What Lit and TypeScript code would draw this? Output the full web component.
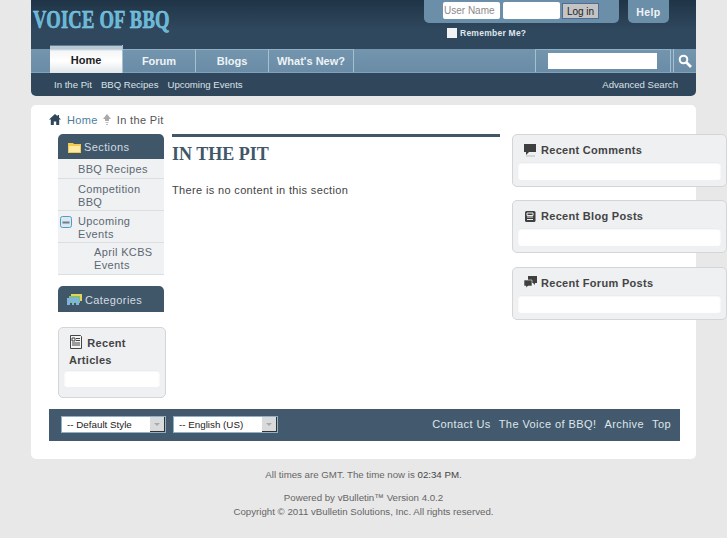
import { LitElement, html, css } from "lit";
import { customElement } from "lit/decorators.js";

@customElement("app-root")
export class AppRoot extends LitElement {
  static styles = css`
    :host { display: block; height: 538px; background: #e8e8e8; overflow: hidden; font-family: "Liberation Sans", Arial, sans-serif; color: #3e3e3e; }
    * { box-sizing: border-box; }
    .wrap { width: 665px; margin-left: 31px; }
    header { height: 96px; background: linear-gradient(#1f3446 0, #30485e 30px, #2f465b 96px); border-radius: 0 0 5px 5px; }
    .top { height: 49px; display: flex; align-items: flex-start; padding: 0 27px 0 2px; }
    .logo { margin-top: 6px; font: bold 18.600px "Liberation Serif", serif; letter-spacing: .2px; color: #66b8d8; -webkit-text-stroke: .4px #8fd0e8; white-space: nowrap; transform: scaleY(1.3); transform-origin: top left; }
    .account { margin-left: auto; display: flex; flex-direction: column; align-items: flex-start; width: 195px; }
    .login { width: 195px; height: 23px; background: #6c8fa9; border-radius: 0 0 5px 5px; display: flex; gap: 3px; padding: 2px 0 0 19px; align-items: flex-start; }
    .login input { width: 57px; height: 17px; border: 0; border-radius: 2px; padding: 0 1px; font: 10px "Liberation Sans", sans-serif; background: #fff; }
    .login input::placeholder { color: #8a8a8a; }
    .login button { width: 37px; height: 16px; margin: 1px 0 0 -1px; padding: 0; background: #c4c4c4; border: 1px solid #4f6d96; font: 10px "Liberation Sans", sans-serif; color: #222; }
    .remember { display: flex; align-items: center; gap: 3px; margin: 5px 0 0 23px; font-size: 8.500px; font-weight: bold; letter-spacing: .25px; color: #dfe6ec; }
    .check { appearance: none; width: 10px; height: 10px; margin: 0; background: #f2f2f2; border: 0; }
    .help { margin-left: 9px; width: 41px; height: 23px; background: #6c8fa9; border-radius: 0 0 5px 5px; color: #f0f4f7; font-size: 10.500px; font-weight: bold; letter-spacing: .4px; text-align: center; padding-top: 6px; }
    nav { height: 24px; display: flex; background: linear-gradient(#7395ae, #6a8ca6); border-bottom: 1px solid #80a3ba; padding-left: 19px; }
    .tab { width: 73px; border-right: 1px solid #a5c0d1; border-top: 1px solid #8fb0c5; color: #eef3f6; font-size: 11px; font-weight: bold; text-align: center; padding-top: 5px; }
    .tab.on { height: 28px; margin-top: -4px; padding-top: 9px; background: linear-gradient(#5f7f97 0, #5f7f97 1px, #b9c9d4 1px, #b9c9d4 4px, #f5f6f7 6px, #fff 16px, #e3e8ec 27px); border-top: 0; color: #1d1d1d; }
    .tab.w { width: 85px; }
    .search { margin-left: auto; width: 136px; border-left: 1px solid #a5c0d1; border-right: 1px solid #a5c0d1; border-top: 1px solid #8fb0c5; padding: 3px 0 0 12px; }
    .search input { display: block; width: 109px; height: 16px; border: 0; background: #fff; padding: 0; }
    .go { width: 23px; margin-left: 2px; border-left: 1px solid #a5c0d1; display: flex; align-items: center; justify-content: center; }
    .sub { height: 23px; display: flex; gap: 9px; align-items: center; padding: 0 18px 1px 23px; font-size: 9.600px; color: #dbe2e8; }
    .sub .adv { margin-left: auto; }
    main { position: relative; margin-top: 9px; height: 354px; background: #fff; border-radius: 5px; padding: 0 16px 0 18px; }
    .crumb { height: 29px; display: flex; align-items: center; gap: 5px; font-size: 11px; letter-spacing: .35px; }
    .crumb a { color: #4d7d9c; margin-left: 1px; }
    .crumb span { color: #555; margin-left: 1px; }
    .cols { display: grid; grid-template-columns: 114px 340px 215px; margin-left: 9px; width: 670px; }
    .head { height: 25px; width: 106px; background: #405669; border-radius: 5px 5px 0 0; color: #d3dce3; font-size: 11px; letter-spacing: .4px; display: flex; align-items: center; gap: 3px; padding: 1px 0 0 10px; }
    .item { width: 106px; min-height: 20px; background: #eff1f3; border-bottom: 1px solid #dcdfe2; color: #5c6872; font-size: 11px; line-height: 13px; letter-spacing: .35px; padding: 4px 4px 1px 20px; position: relative; }
    .item.d2 { padding-top: 3px; padding-bottom: 2px; padding-left: 36px; }
    .minus { position: absolute; left: 2px; top: 5px; }
    .cats { height: 26px; margin-top: 11px; padding-left: 9px; }
    .box { background: #eef0f2; border: 1px solid #d3d5d8; border-radius: 5px; }
    .rec { width: 108px; height: 71px; margin-top: 15px; padding: 7px 5px 0; font-size: 11px; letter-spacing: .3px; font-weight: bold; color: #444; line-height: 17px; }
    .rec .t { padding-left: 5px; }
    .rec svg { vertical-align: -2px; margin-right: 1px; }
    .slot { background: #fff; border-radius: 3px; height: 18px; box-shadow: inset 0 1px 2px #e2e4e6; }
    .rec .slot { height: 17px; margin-top: 1px; }
    .bar { height: 3px; width: 328px; background: #405669; }
    h1 { margin: 7px 0 0; font: bold 18px "Liberation Serif", serif; color: #405669; }
    .center p { margin: 19px 0 0; font-size: 11px; letter-spacing: .35px; color: #444; }
    .right { display: flex; flex-direction: column; gap: 13.400px; }
    .rbox { height: 53px; padding: 5px 5px 0; }
    .rbox .t { height: 20px; display: flex; align-items: center; gap: 4px; padding-left: 6px; font-size: 11px; font-weight: bold; letter-spacing: .3px; color: #444; }
    .rbox .slot { margin-top: 2px; }
    .foot { position: absolute; left: 18px; top: 304px; width: 631px; height: 32px; background: #435a6e; display: flex; align-items: center; padding: 0 9px 1px 12px; gap: 7px; }
    .sel { width: 105px; height: 17px; background: #fff; border: 1px solid #8fb0c5; position: relative; color: #222; font-size: 9.800px; padding: 2px 0 0 5px; }
    .sel i { position: absolute; right: 0; top: 0; width: 15px; height: 15px; background: #d8dadb; border-right: 1px solid #333; border-bottom: 1px solid #333; }
    .sel i::after { content: ""; position: absolute; left: 4px; top: 6px; border: 3px solid transparent; border-top-color: #a8abad; }
    .links { margin-left: auto; margin-bottom: 2px; display: flex; gap: 8px; color: #dfe5ea; font-size: 11px; letter-spacing: .42px; }
    .below { text-align: center; width: 665px; font-size: 9.700px; color: #666; padding-top: 9px; }
    .below p { margin: 0; line-height: 14px; }
    .below p + p { margin-top: 9px; }
    .below b { font-weight: normal; color: #444; }
  `;

  render() {
    return html`
      <div class="wrap">
        <header>
          <div class="top">
            <div class="logo">VOICE OF BBQ</div>
            <div class="account">
              <div class="login">
                <input placeholder="User Name" /><input type="password" /><button>Log in</button>
              </div>
              <label class="remember"><input class="check" type="checkbox" /><span>Remember Me?</span></label>
            </div>
            <div class="help">Help</div>
          </div>
          <nav>
            <div class="tab on">Home</div>
            <div class="tab">Forum</div>
            <div class="tab">Blogs</div>
            <div class="tab w">What's New?</div>
            <div class="search"><input /></div>
            <div class="go">
              <svg width="14" height="14" viewBox="0 0 14 14"><circle cx="5.500" cy="5.500" r="3.800" fill="none" stroke="#fff" stroke-width="2"/><path d="M8.500 8.500 13 13" stroke="#fff" stroke-width="2.600"/></svg>
            </div>
          </nav>
          <div class="sub">
            <span>In the Pit</span><span>BBQ Recipes</span><span>Upcoming Events</span>
            <span class="adv">Advanced Search</span>
          </div>
        </header>
        <main>
          <div class="crumb">
            <svg width="12" height="11" viewBox="0 0 12 11"><path d="M6 0 0 5.500h1.800V11h3V7.500h2.400V11h3V5.500H12L10 3.600V1H8.600v1.300Z" fill="#2f465b"/></svg>
            <a>Home</a>
            <svg width="8" height="11" viewBox="0 0 8 11"><path d="M4 0 8 5H6v2H2V5H0Z" fill="#a9a9a9"/><path d="M2.500 8h3v1h-3ZM3 10h2v1H3Z" fill="#bbb"/></svg>
            <span>In the Pit</span>
          </div>
          <div class="cols">
            <div>
              <div class="head">
                <svg width="13" height="11" viewBox="0 0 13 11"><path d="M0 1h5l1 1h7v9H0Z" fill="#f3c94f"/><path d="M1 4h11v6H1Z" fill="#fdeaa0"/></svg>
                <span>Sections</span>
              </div>
              <div class="item">BBQ Recipes</div>
              <div class="item">Competition BBQ</div>
              <div class="item">
                <svg class="minus" width="12" height="12" viewBox="0 0 12 12"><rect x=".5" y=".5" width="11" height="11" rx="2" fill="#dbe6ee" stroke="#4f9cc9"/><path d="M2.500 6.500h7" stroke="#6d7f8d" stroke-width="2"/></svg>
                Upcoming Events
              </div>
              <div class="item d2">April KCBS Events</div>
              <div class="head cats">
                <svg width="15" height="11" viewBox="0 0 15 11"><path d="M4 0h11v7H4Z" fill="#e5d35a"/><path d="M2 2h11v7H2Z" fill="#7dc27c"/><path d="M0 4h12v7H9V8H7v3H5V8H3v3H0Z" fill="#7fb4dc"/></svg>
                <span>Categories</span>
              </div>
              <div class="box rec">
                <div class="t">
                  <svg width="14" height="14" viewBox="0 0 14 14"><path d="M1.500.5h10l1 1v12h-11Z" fill="#f4f4f4" stroke="#444"/><path d="M3 3h3v3H3ZM7 3.500h4M7 5.500h4M3 8h8M3 10h8" stroke="#444" fill="none"/></svg>
                  Recent Articles
                </div>
                <div class="slot"></div>
              </div>
            </div>
            <div class="center">
              <div class="bar"></div>
              <h1>IN THE PIT</h1>
              <p>There is no content in this section</p>
            </div>
            <div class="right">
              <div class="box rbox">
                <div class="t"><svg width="13" height="13" viewBox="0 0 13 13"><path d="M0 0h12v8H5l-3 3V8H0Z" fill="#3f3f3f"/><path d="M2 12h9" stroke="#bbb"/></svg>Recent Comments</div>
                <div class="slot"></div>
              </div>
              <div class="box rbox">
                <div class="t"><svg width="13" height="13" viewBox="0 0 13 13"><rect x="1" y="1" width="10.500" height="11" rx="1.500" fill="#3f3f3f"/><path d="M3 3h6v2.500H3ZM3 7h6M3 9.500h6" stroke="#eee" fill="none"/></svg>Recent Blog Posts</div>
                <div class="slot"></div>
              </div>
              <div class="box rbox">
                <div class="t"><svg width="13" height="13" viewBox="0 0 13 13"><path d="M4 0h9v7h-2v2L9 7H4Z" fill="#3f3f3f"/><path d="M0 4h8v6H4l-2 2v-2H0Z" fill="#3f3f3f" stroke="#eef0f2" stroke-width=".6"/></svg>Recent Forum Posts</div>
                <div class="slot"></div>
              </div>
            </div>
          </div>
          <div class="foot">
            <div class="sel">-- Default Style<i></i></div>
            <div class="sel">-- English (US)<i></i></div>
            <div class="links"><span>Contact Us</span><span>The Voice of BBQ!</span><span>Archive</span><span>Top</span></div>
          </div>
        </main>
        <div class="below">
          <p>All times are GMT. The time now is <b>02:34 PM</b>.</p>
          <p>Powered by vBulletin™ Version 4.0.2<br />Copyright © 2011 vBulletin Solutions, Inc. All rights reserved.</p>
        </div>
      </div>
    `;
  }
}
